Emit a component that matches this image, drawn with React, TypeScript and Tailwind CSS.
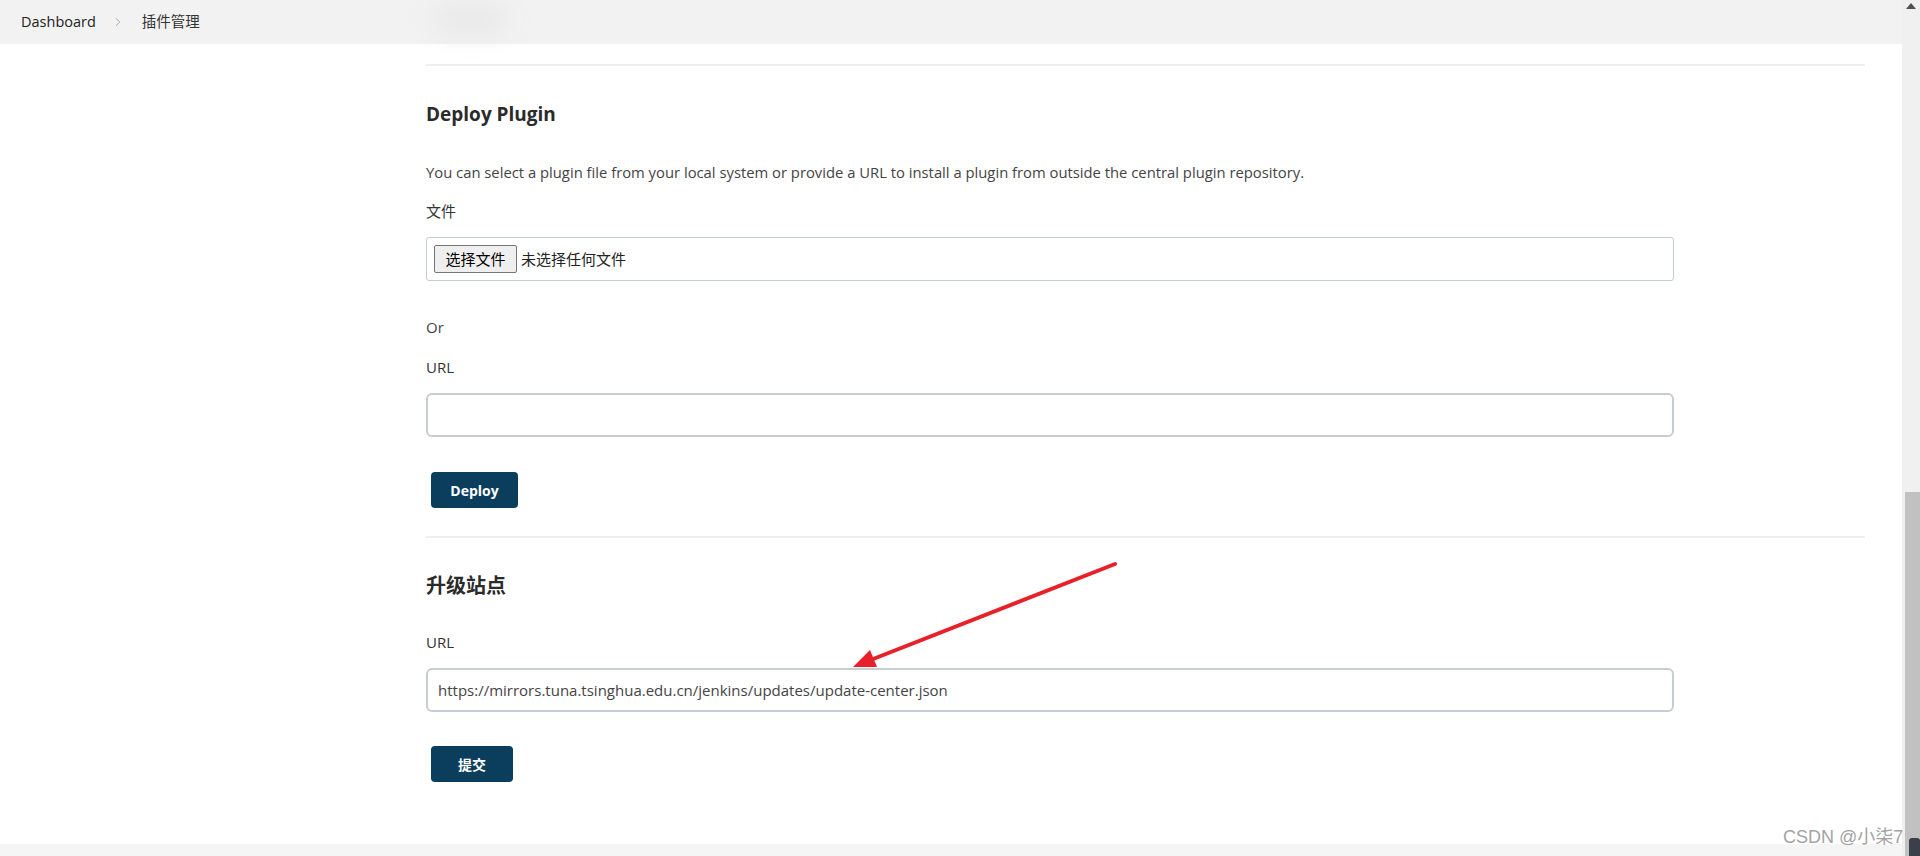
import React from "react";
import { ChevronRight } from "lucide-react";

const sans = "font-['Open_Sans','Noto_Sans_CJK_SC',sans-serif]";

function Divider({ className = "" }: { className?: string }) {
  return <div className={`h-[2px] bg-[#efefef] ${className}`} />;
}

function PrimaryButton({ label, width }: { label: string; width: string }) {
  return (
    <button
      className={`${width} ml-[5px] h-[36px] rounded-[4px] bg-[#0b3d5d] text-white text-[14px] font-bold flex items-center justify-center`}
    >
      {label}
    </button>
  );
}

export default function App() {
  return (
    <div className={`relative flex h-[856px] w-[1920px] overflow-hidden bg-white text-[#333] ${sans}`}>
      <div className="flex min-w-0 flex-1 flex-col">
        {/* breadcrumb bar */}
        <header className="relative flex h-[44px] shrink-0 items-center bg-[#f2f2f2] pl-[21px] text-[14.5px]">
          <span className="text-[#222]">Dashboard</span>
          <ChevronRight size={14} strokeWidth={1.5} className="ml-[15px] text-[#999]" />
          <span className="ml-[17px] text-[#333]">插件管理</span>
          <div className="absolute left-[432px] top-[4px] h-[30px] w-[76px] rounded-full bg-[#e9e9e9] blur-md" />
        </header>

        <main className="flex-1 pl-[426px] pr-[37px] pt-[20px]">
          <Divider />

          {/* Deploy Plugin */}
          <h2 className="mt-[34px] text-[19px] font-bold leading-[28px] text-[#2b2b2b]">Deploy Plugin</h2>
          <p className="mt-[33px] text-[14.8px] leading-[22px] text-[#444]">
            You can select a plugin file from your local system or provide a URL to install a plugin from outside the central plugin repository.
          </p>

          <div className="max-w-[1248px]">
            <div className="mt-[17px] text-[15px] leading-[22px]">文件</div>
            <div className="mt-[15px] flex h-[44px] items-center rounded-[3px] border border-[#c5ccd1] pl-[7px]">
              <span className="flex h-[28px] w-[83px] items-center justify-center rounded-[2px] border border-[#767676] bg-[#efefef] text-[15px] text-black">
                选择文件
              </span>
              <span className="ml-[4px] text-[15px] text-[#222]">未选择任何文件</span>
            </div>

            <div className="mt-[35px] text-[15px] leading-[22px] text-[#444]">Or</div>
            <div className="mt-[18px] text-[15px] leading-[22px]">URL</div>
            <div className="mt-[15px] h-[44px] rounded-[6px] border-2 border-[#c6ced3]" />
          </div>

          <div className="mt-[35px]">
            <PrimaryButton label="Deploy" width="w-[87px]" />
          </div>

          <Divider className="mt-[28px]" />

          {/* 升级站点 */}
          <h2 className="mt-[34px] text-[20px] font-bold leading-[28px] text-[#2b2b2b]">升级站点</h2>
          <div className="max-w-[1248px]">
            <div className="mt-[31px] text-[15px] leading-[22px]">URL</div>
            <div className="mt-[15px] flex h-[44px] items-center rounded-[6px] border-2 border-[#c6ced3] pl-[10px] text-[15px] text-[#444]">
              https://mirrors.tuna.tsinghua.edu.cn/jenkins/updates/update-center.json
            </div>
          </div>
          <div className="mt-[34px]">
            <PrimaryButton label="提交" width="w-[82px]" />
          </div>
        </main>

        <div className="h-[12px] shrink-0 bg-[#f5f5f5]" />
      </div>

      {/* scrollbar */}
      <div className="flex w-[18px] shrink-0 flex-col items-center bg-[#f0f0f0]">
        <svg width="10" height="6" viewBox="0 0 10 6" className="mt-[3px]">
          <polygon points="5,0 10,6 0,6" fill="#505050" />
        </svg>
        <div className="ml-[2px] mt-[483px] w-[15px] flex-1 bg-[#c1c1c1]" />
      </div>

      {/* annotation arrow */}
      <svg className="pointer-events-none absolute inset-0" width="1920" height="856">
        <line x1="1115" y1="564" x2="868" y2="661" stroke="#e8202a" strokeWidth="4" strokeLinecap="round" />
        <polygon points="853,667 870,650 877,667" fill="#e8202a" />
      </svg>

      {/* watermark */}
      <div className="pointer-events-none absolute left-[1783px] top-[826px] font-['Liberation_Sans','Noto_Sans_CJK_SC',sans-serif] text-[18px] leading-[22px] text-[#a3a3a3]">
        CSDN @小柒7
      </div>
      <div className="absolute left-[1909px] top-[838px] h-[18px] w-[11px] rounded-t-[3px] bg-[#3a3f4a]" />
    </div>
  );
}
